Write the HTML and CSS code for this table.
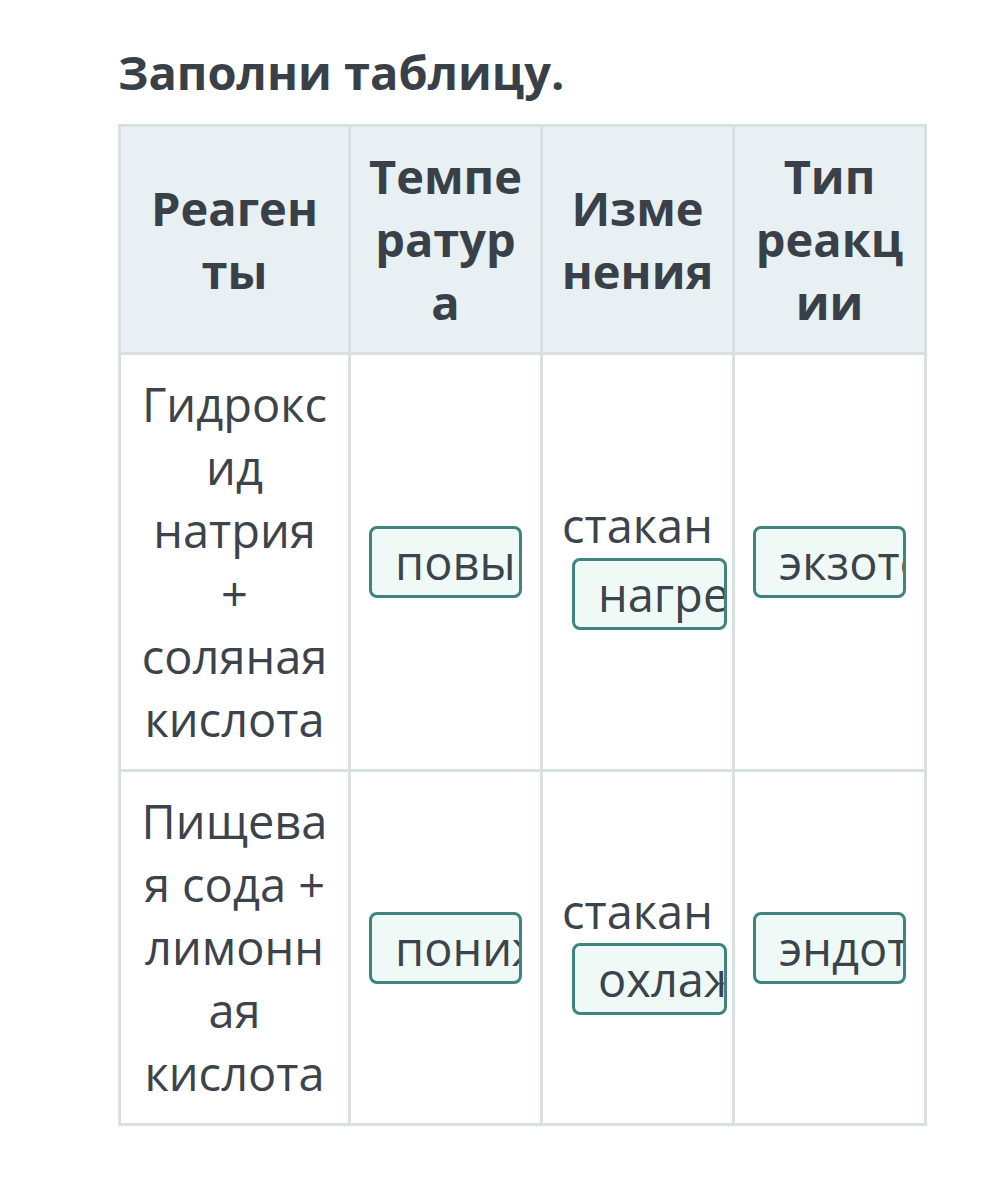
FILE: index.html
```html
<!DOCTYPE html>
<html lang="ru">
<head>
<meta charset="utf-8">
<link rel="stylesheet" href="styles.css">
</head>
<body>
<main class="page">
  <h1 class="title">Заполни таблицу.</h1>
  <table class="grid">
    <colgroup>
      <col class="c1"><col class="c2"><col class="c3"><col class="c4">
    </colgroup>
    <thead>
      <tr>
        <th>Реагенты</th>
        <th>Температура</th>
        <th>Изменения</th>
        <th>Тип реакции</th>
      </tr>
    </thead>
    <tbody>
      <tr>
        <td>Гидроксид натрия + соляная кислота</td>
        <td><span class="chip">повышение</span></td>
        <td>стакан <span class="chip chip--shift">нагревание</span></td>
        <td><span class="chip">экзотермическая</span></td>
      </tr>
      <tr>
        <td>Пищевая сода + лимонная кислота</td>
        <td><span class="chip">понижение</span></td>
        <td>стакан <span class="chip chip--shift">охлаждение</span></td>
        <td><span class="chip">эндотермическая</span></td>
      </tr>
    </tbody>
  </table>
</main>
</body>
</html>
```
FILE: styles.css
```css
html, body {
  margin: 0;
  padding: 0;
  background: #ffffff;
}
.page {
  padding: 40px 0 0 118px;
  font-family: "Open Sans", "Noto Sans", sans-serif;
  color: #3d434a;
}
.title {
  margin: 0 0 20px 0;
  font-size: 47px;
  font-weight: 700;
  line-height: 64px;
  color: #3a4048;
}
.grid {
  border-collapse: collapse;
  table-layout: fixed;
  width: 806px;
  font-size: 47px;
  line-height: 63px;
}
.c1 { width: 230px; }
.c2 { width: 192px; }
.c3 { width: 192px; }
.c4 { width: 192px; }
.grid th,
.grid td {
  border: 3px solid #d9e0e1;
  padding: 18px 17px;
  text-align: center;
  vertical-align: middle;
  overflow-wrap: anywhere;
}
.grid th {
  background: #e8f0f3;
  font-weight: 700;
  color: #3a4048;
}
.grid td {
  font-weight: 400;
}
.chip {
  display: inline-block;
  vertical-align: middle;
  box-sizing: border-box;
  width: 153px;
  height: 72px;
  padding: 2px 0 0 23px;
  border: 3px solid #40847f;
  border-radius: 8px;
  background: #effaf7;
  white-space: nowrap;
  overflow: hidden;
  text-align: left;
  overflow-wrap: normal;
}
.chip--shift {
  margin-left: 12px;
  width: 155px;
}
```
